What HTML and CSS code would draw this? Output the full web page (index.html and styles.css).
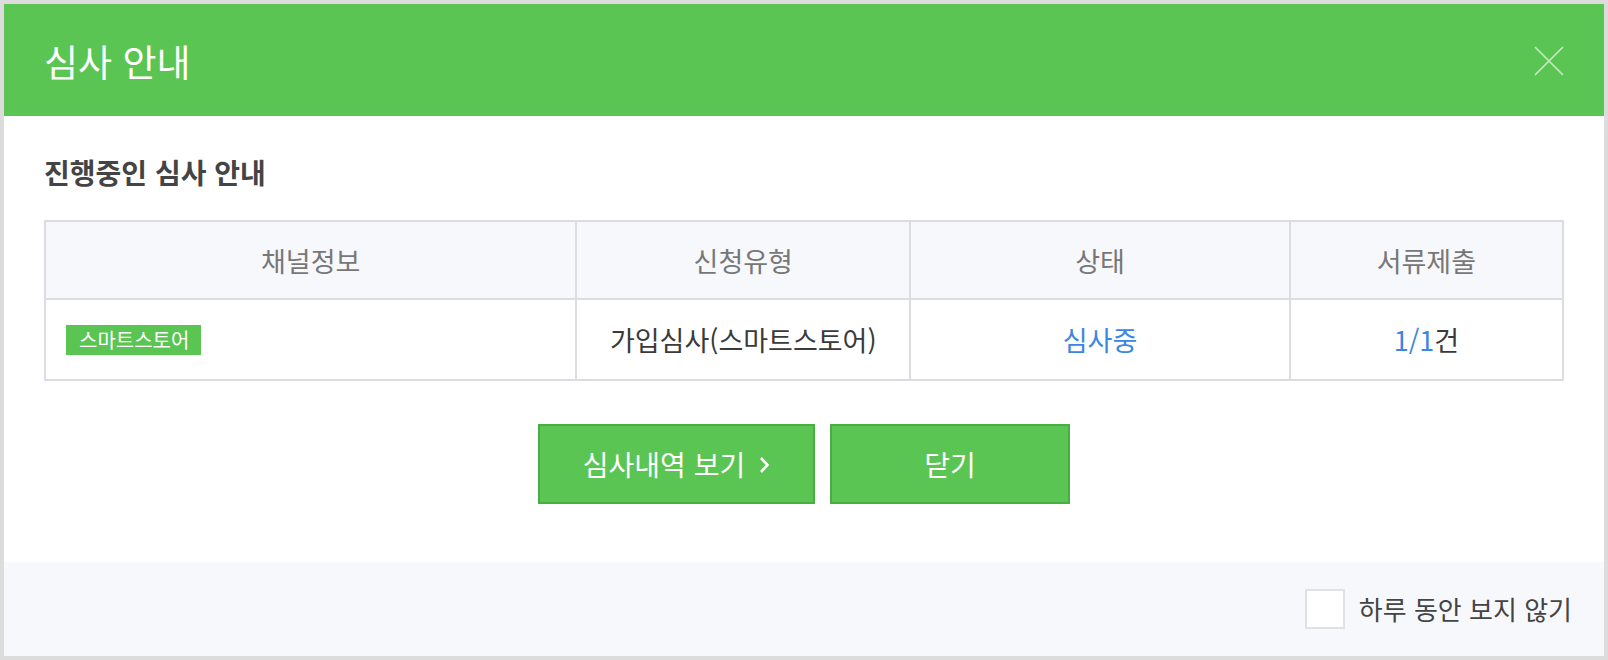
FILE: index.html
```html
<!DOCTYPE html>
<html lang="ko">
<head>
<meta charset="utf-8">
<title>심사 안내</title>
<link rel="stylesheet" href="styles.css">
</head>
<body>
<div class="dialog">
  <div class="dlg-header">
    <h1 class="dlg-title">심사 안내</h1>
    <button class="dlg-close" type="button" aria-label="닫기">
      <svg width="30" height="30" viewBox="0 0 30 30"><path d="M1 1 L29 29 M29 1 L1 29" stroke="#c6ecc2" stroke-width="1.6" fill="none"/></svg>
    </button>
  </div>
  <div class="dlg-body">
    <h2 class="sub-title">진행중인 심사 안내</h2>
    <table class="review-table">
      <colgroup>
        <col class="c1"><col class="c2"><col class="c3"><col class="c4">
      </colgroup>
      <thead>
        <tr><th>채널정보</th><th>신청유형</th><th>상태</th><th>서류제출</th></tr>
      </thead>
      <tbody>
        <tr>
          <td class="left"><span class="badge">스마트스토어</span></td>
          <td>가입심사(스마트스토어)</td>
          <td class="blue">심사중</td>
          <td><span class="blue">1/1</span>건</td>
        </tr>
      </tbody>
    </table>
    <div class="btn-row">
      <button class="btn btn-wide" type="button">심사내역 보기
        <svg class="chev" width="11" height="18" viewBox="0 0 11 18"><path d="M2 2 L8.5 9 L2 16" stroke="#fff" stroke-width="2.6" fill="none"/></svg>
      </button>
      <button class="btn btn-close" type="button">닫기</button>
    </div>
  </div>
  <div class="dlg-footer">
    <label class="nosee"><span class="checkbox"></span><span class="nosee-text">하루 동안 보지 않기</span></label>
  </div>
</div>
</body>
</html>
```
FILE: styles.css
```css
* { box-sizing: border-box; }
html, body { margin: 0; padding: 0; }
body {
  background: #dcdcdc;
  font-family: "Noto Sans CJK KR", "Noto Sans", sans-serif;
  width: 1608px;
  height: 660px;
  padding: 4px;
}
.dialog {
  width: 1600px;
  height: 652px;
  background: #fff;
  display: flex;
  flex-direction: column;
}
.dlg-header {
  height: 112px;
  background: #5bc553;
  display: flex;
  align-items: center;
  justify-content: space-between;
  padding: 0 40px 0 40px;
}
.dlg-title {
  margin: 0;
  font-size: 37px;
  font-weight: 400;
  color: #fff;
  line-height: 44px;
  padding-top: 2px;
}
.dlg-close {
  width: 30px;
  height: 30px;
  padding: 0;
  border: 0;
  background: none;
  display: block;
  margin-top: 2px;
}
.dlg-close svg { display: block; }
.dlg-body {
  flex: 1;
  padding: 38px 40px 0 40px;
}
.sub-title {
  margin: 0;
  font-size: 28px;
  font-weight: 700;
  color: #444;
  line-height: 36px;
}
.review-table {
  margin-top: 30px;
  width: 100%;
  border-collapse: separate;
  border-spacing: 0;
  border-top: 2px solid #dcdde2;
  border-left: 2px solid #dcdde2;
  table-layout: fixed;
}
.c1 { width: 35%; }
.c2 { width: 22%; }
.c3 { width: 25%; }
.c4 { width: 18%; }
.review-table th, .review-table td {
  border-right: 2px solid #dcdde2;
  border-bottom: 2px solid #dcdde2;
  text-align: center;
  padding: 0;
  font-size: 27px;
}
.review-table th {
  height: 78px;
  background: #f7f8fc;
  color: #777;
  font-weight: 400;
}
.review-table td {
  height: 81px;
  color: #3a3a3a;
}
.review-table td.left {
  text-align: left;
  padding-left: 20px;
  line-height: 30px;
}
.review-table .blue { color: #3b87e2; }
.badge {
  display: inline-block;
  background: #5bc553;
  color: #fff;
  font-size: 20px;
  line-height: 30px;
  height: 30px;
  padding: 0 12px 0 13px;
  vertical-align: top;
}
.btn-row {
  display: flex;
  justify-content: center;
  gap: 15px;
  margin-top: 43px;
}
.btn {
  height: 80px;
  background: #5bc553;
  border: 2px solid #4aad43;
  color: #fff;
  font-family: "Noto Sans CJK KR", "Noto Sans", sans-serif;
  font-size: 28px;
  padding: 0;
  display: flex;
  align-items: center;
  justify-content: center;
}
.btn-wide { width: 277px; }
.btn-close { width: 240px; }
.chev { margin-left: 14px; margin-top: 2px; }
.dlg-footer {
  height: 94px;
  background: #f7f8fc;
  display: flex;
  justify-content: flex-end;
  align-items: center;
  padding-right: 32px;
}
.nosee {
  display: flex;
  align-items: center;
  gap: 14px;
}
.checkbox {
  width: 40px;
  height: 40px;
  background: #fff;
  border: 2px solid #dfe1e6;
  display: block;
}
.nosee-text {
  font-size: 26px;
  color: #444;
  line-height: 40px;
}
```
